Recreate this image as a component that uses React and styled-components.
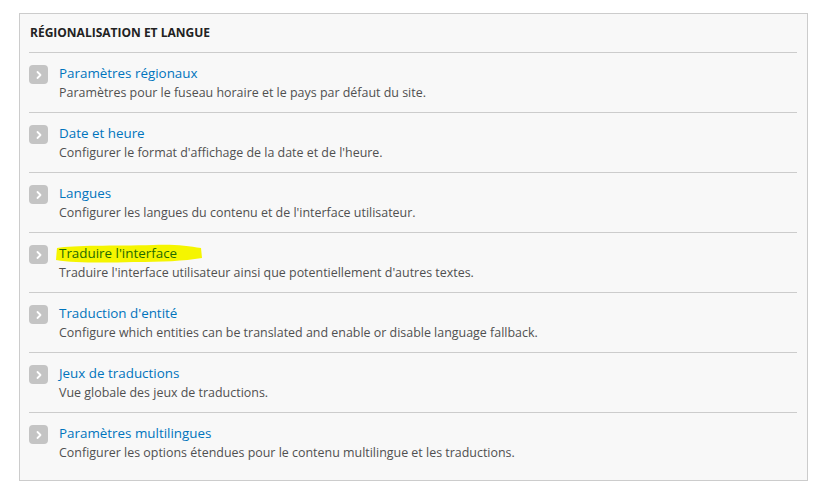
import React from "react";
import styled, { createGlobalStyle } from "styled-components";

const GlobalStyle = createGlobalStyle`
  html, body {
    margin: 0;
    padding: 0;
    background: #ffffff;
  }
  body {
    font-family: "Open Sans", "Noto Sans", sans-serif;
  }
`;

const items = [
  {
    title: "Paramètres régionaux",
    desc: "Paramètres pour le fuseau horaire et le pays par défaut du site.",
  },
  {
    title: "Date et heure",
    desc: "Configurer le format d'affichage de la date et de l'heure.",
  },
  {
    title: "Langues",
    desc: "Configurer les langues du contenu et de l'interface utilisateur.",
  },
  {
    title: "Traduire l'interface",
    desc: "Traduire l'interface utilisateur ainsi que potentiellement d'autres textes.",
    marked: true,
  },
  {
    title: "Traduction d'entité",
    desc: "Configure which entities can be translated and enable or disable language fallback.",
  },
  {
    title: "Jeux de traductions",
    desc: "Vue globale des jeux de traductions.",
  },
  {
    title: "Paramètres multilingues",
    desc: "Configurer les options étendues pour le contenu multilingue et les traductions.",
  },
];

const Page = () => {
  return (
    <>
      <GlobalStyle />
      <Wrapper>
        <Panel>
          <Heading>Régionalisation et langue</Heading>
          <List>
            {items.map((el) => (
              <Row key={el.title}>
                <Arrow>
                  <svg width="8" height="10" viewBox="0 0 8 10">
                    <path
                      d="M2.5 2 L5.5 5 L2.5 8"
                      fill="none"
                      stroke="#ffffff"
                      strokeWidth="1.8"
                      strokeLinecap="round"
                      strokeLinejoin="round"
                    />
                  </svg>
                </Arrow>
                <Texts>
                  <TitleLine>
                    {el.marked && (
                      <Marker viewBox="0 0 150 22" preserveAspectRatio="none">
                        <path
                          d="M3 6 C20 3 60 4 100 3 C120 2 135 4 148 6 L149 16 C130 19 110 20 80 20 C50 21 20 21 2 18 Z"
                          fill="#f5f500"
                        />
                      </Marker>
                    )}
                    <ItemLink href="#" $marked={el.marked}>
                      {el.title}
                    </ItemLink>
                  </TitleLine>
                  <Desc>{el.desc}</Desc>
                </Texts>
              </Row>
            ))}
          </List>
        </Panel>
      </Wrapper>
    </>
  );
};

export default Page;

const Wrapper = styled.div`
  padding: 13px 7px 12px 19px;
`;

const Panel = styled.div`
  width: 789px;
  height: 468px;
  box-sizing: border-box;
  border: 1px solid #cccccc;
  background: #f8f8f8;
  padding: 0 10px 0 9px;
`;

const Heading = styled.h2`
  margin: 0;
  height: 39px;
  box-sizing: border-box;
  display: flex;
  align-items: center;
  padding-left: 1px;
  padding-bottom: 2px;
  font-size: 12px;
  font-weight: 700;
  text-transform: uppercase;
  color: #222222;
  border-bottom: 1px solid #cccccc;
`;

const List = styled.ul`
  list-style: none;
  margin: 0;
  padding: 0;
`;

const Row = styled.li`
  display: flex;
  align-items: flex-start;
  gap: 11px;
  height: 60px;
  box-sizing: border-box;
  padding-top: 10px;
  border-bottom: 1px solid #cccccc;

  &:last-child {
    border-bottom: none;
  }
`;

const Arrow = styled.span`
  flex: none;
  width: 19px;
  height: 19px;
  margin-top: 2px;
  border-radius: 4px;
  background: #c4c4c4;
  display: flex;
  align-items: center;
  justify-content: center;
`;

const Texts = styled.div`
  display: flex;
  flex-direction: column;
`;

const TitleLine = styled.div`
  position: relative;
  display: flex;
  align-items: center;
  height: 20px;
  font-size: 13.4px;
  line-height: 20px;
`;

const Marker = styled.svg`
  position: absolute;
  left: -5px;
  top: -1px;
  width: 149px;
  height: 22px;
`;

const ItemLink = styled.a`
  position: relative;
  font-size: 13.4px;
  line-height: 20px;
  text-decoration: none;
  color: ${(p) => (p.$marked ? "#1f6a00" : "#0074bd")};
`;

const Desc = styled.div`
  font-size: 12.45px;
  line-height: 20px;
  color: #505050;
`;
